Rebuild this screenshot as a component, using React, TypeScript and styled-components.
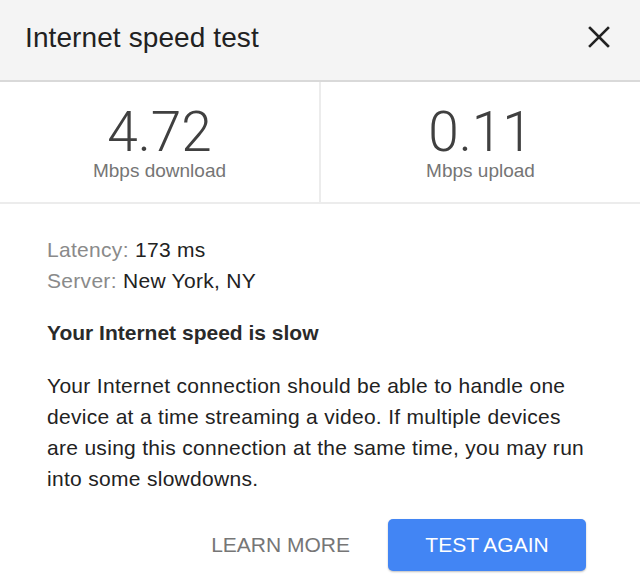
import styled, { createGlobalStyle } from "styled-components";

const Global = createGlobalStyle`
  html, body {
    margin: 0;
    padding: 0;
    background: #ffffff;
  }
  body {
    font-family: "Liberation Sans", Arial, sans-serif;
    color: #212121;
  }
`;

const Card = styled.div`
  width: 640px;
  height: 588px;
  background: #fff;
  display: flex;
  flex-direction: column;
`;

const Header = styled.header`
  height: 80px;
  background: #f4f4f4;
  border-bottom: 2px solid #d9d9d9;
  display: flex;
  align-items: center;
  justify-content: space-between;
  padding: 0 28px 0 25px;
  box-sizing: content-box;
`;

const Title = styled.h1`
  margin: 0;
  font-size: 28px;
  font-weight: 400;
  letter-spacing: 0.1px;
  color: #212121;
  padding-bottom: 4px;
`;

const Close = styled.button`
  border: 0;
  background: none;
  padding: 0;
  width: 26px;
  height: 26px;
  display: flex;
  align-items: center;
  justify-content: center;
  margin-bottom: 6px;
`;

const Stats = styled.div`
  display: grid;
  grid-template-columns: 1fr 2px 1fr;
  height: 120px;
  border-bottom: 2px solid #ececec;
`;

const Divider = styled.div`
  background: #ececec;
`;

const Stat = styled.div`
  display: flex;
  flex-direction: column;
  align-items: center;
  padding-top: 22px;
`;

const Value = styled.div`
  font-family: Roboto, "Liberation Sans", sans-serif;
  font-weight: 300;
  font-size: 55px;
  line-height: 56px;
  color: #404040;
`;

const Unit = styled.div`
  font-size: 19px;
  color: #757575;
`;

const Body = styled.div`
  padding: 30px 50px 0 47px;
  display: flex;
  flex-direction: column;
  font-size: 21px;
  letter-spacing: 0.3px;
  line-height: 31px;
`;

const Info = styled.div`
  color: #222;
`;

const Label = styled.span`
  color: #8a8a8a;
`;

const Heading = styled.h2`
  margin: 21px 0 0;
  font-size: 21px;
  line-height: 31px;
  font-weight: 700;
  letter-spacing: 0;
  color: #2a2a2a;
`;

const Para = styled.p`
  margin: 22px 0 0;
  color: #222;
`;

const Actions = styled.div`
  display: flex;
  justify-content: flex-end;
  align-items: center;
  gap: 38px;
  padding: 25px 54px 0 0;
`;

const Button = styled.button<{ $primary?: boolean }>`
  font-family: "Liberation Sans", Arial, sans-serif;
  font-size: 21px;
  text-transform: uppercase;
  border: 0;
  border-radius: 5px;
  height: 52px;
  padding: 0 ${(p) => (p.$primary ? "37px" : "0")};
  min-width: ${(p) => (p.$primary ? "198px" : "0")};
  background: ${(p) => (p.$primary ? "#4285f4" : "transparent")};
  color: ${(p) => (p.$primary ? "#ffffff" : "#767676")};
  box-shadow: ${(p) => (p.$primary ? "0 1px 2px rgba(0,0,0,0.25)" : "none")};
`;

export default function App() {
  return (
    <>
      <Global />
      <Card>
        <Header>
          <Title>Internet speed test</Title>
          <Close aria-label="Close">
            <svg width="22" height="22" viewBox="0 0 22 22">
              <path
                d="M2 2L20 20M20 2L2 20"
                stroke="#222"
                strokeWidth="2.6"
                strokeLinecap="square"
              />
            </svg>
          </Close>
        </Header>
        <Stats>
          <Stat>
            <Value>4.72</Value>
            <Unit>Mbps download</Unit>
          </Stat>
          <Divider />
          <Stat>
            <Value>0.11</Value>
            <Unit>Mbps upload</Unit>
          </Stat>
        </Stats>
        <Body>
          <Info>
            <Label>Latency:</Label> 173 ms
          </Info>
          <Info>
            <Label>Server:</Label> New York, NY
          </Info>
          <Heading>Your Internet speed is slow</Heading>
          <Para>
            Your Internet connection should be able to handle one device at a
            time streaming a video. If multiple devices are using this
            connection at the same time, you may run into some slowdowns.
          </Para>
        </Body>
        <Actions>
          <Button>Learn more</Button>
          <Button $primary>Test again</Button>
        </Actions>
      </Card>
    </>
  );
}
